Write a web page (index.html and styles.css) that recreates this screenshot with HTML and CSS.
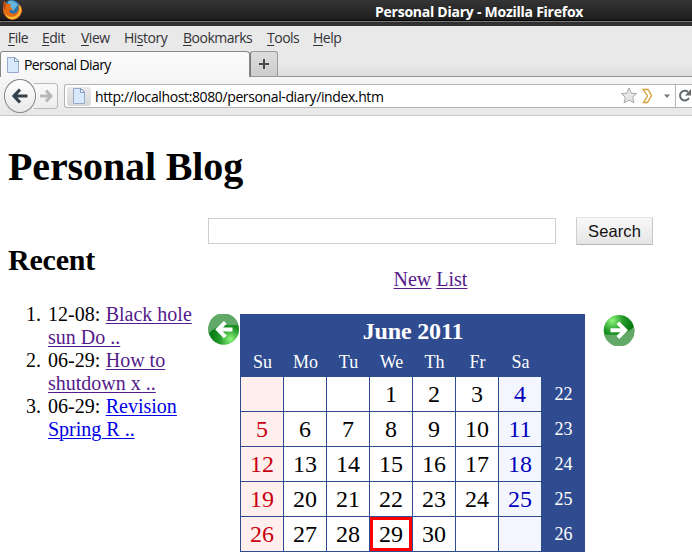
FILE: index.html
```html
<!DOCTYPE html>
<html lang="en">
<head>
<meta charset="utf-8">
<title>Personal Diary</title>
<link rel="stylesheet" href="styles.css">
</head>
<body>
<header class="titlebar">
  <svg class="fox" width="22" height="21" viewBox="0 0 22 21"><circle cx="11" cy="9" r="9" fill="#2d6fa8"/><path d="M7 1Q13-1 17 5L12 11 8 8Z" fill="#66b4dc"/><path d="M3 1L6 4 10 4 9 7 12 9 8 11Q10 15 15 13 19 10 17 4 22 7 21 12 19 19 11 20 2 18 2 9Z" fill="#e56b13"/><path d="M18 5Q20 16 11 17 6 17 4 13 6 20 13 19 21 16 20 7Z" fill="#fbc23c"/><path d="M3 1L5 5 4 10Q1 7 3 1" fill="#b84619"/></svg>
  <span class="window-title">Personal Diary - Mozilla Firefox</span>
</header>
<nav class="menubar">
  <span><u>F</u>ile</span><span><u>E</u>dit</span><span><u>V</u>iew</span><span>Hi<u>s</u>tory</span><span><u>B</u>ookmarks</span><span><u>T</u>ools</span><span><u>H</u>elp</span>
</nav>
<div class="tabs">
  <div class="tab"><svg class="page-icon" width="12" height="16" viewBox="0 0 12 16"><path d="M.5.5H8L11.5 4V15.5H.5Z" fill="#d9e9fc" stroke="#94abce"/><path d="M7.5.5V4.5H11.5Z" fill="#fff" stroke="#819bc0"/></svg><span class="tab-name">Personal Diary</span></div>
  <div class="new-tab"><svg width="12" height="12" viewBox="0 0 12 12"><path d="M6 1V11M1 6H11" stroke="#434b52" stroke-width="2"/></svg></div>
</div>
<div class="toolbar">
  <div class="back"><svg width="18" height="18" viewBox="0 0 18 18"><path d="M9 2.5L3 9 9 15.5M3.5 9H16.5" fill="none" stroke="#34414c" stroke-width="3.2"/></svg></div>
  <div class="forward"><svg width="14" height="14" viewBox="0 0 14 14"><path d="M7 1.5L12 7 7 12.5M1 7H11.5" fill="none" stroke="#b4b8bb" stroke-width="3"/></svg></div>
  <div class="address">
    <div class="identity"><svg width="12" height="16" viewBox="0 0 12 16"><path d="M.5.5H8L11.5 4V15.5H.5Z" fill="#d9e9fc" stroke="#94abce"/><path d="M7.5.5V4.5H11.5Z" fill="#fff" stroke="#819bc0"/></svg></div>
    <span class="url">http://localhost:8080/personal-diary/index.htm</span>
    <svg class="controls" width="71" height="22" viewBox="0 0 71 22"><path d="M8 3L10.3 8.2 15.5 8.6 11.7 12.3 13 17.8 8 15 3 17.8 4.3 12.3.5 8.6 5.7 8.2Z" fill="#e7e7e7" stroke="#a7a7a7"/><path d="M22 4.5L27 4.5 30.5 10.5 26.5 17.5H22.5L26.5 11Z" fill="#fff" stroke="#d4a035" stroke-width="1.3"/><path d="M43 9.5H49L46 13Z" fill="#777"/><path d="M54.5 0V22" stroke="#b6b6b6"/><path d="M67 7A4.8 4.8 0 1 0 68 13" fill="none" stroke="#666b70" stroke-width="2"/><path d="M70 4V10.5H64Z" fill="#666b70"/></svg>
  </div>
</div>
<main class="blog">
  <h1>Personal Blog</h1>
  <div class="columns">
    <aside class="recent">
      <h2>Recent</h2>
      <ol>
        <li><span>1.</span>12-08: <a href="#">Black hole<br>sun Do ..</a></li>
        <li><span>2.</span>06-29: <a href="#">How to<br>shutdown x ..</a></li>
        <li><span>3.</span>06-29: <a class="unvisited" href="#">Revision<br>Spring R ..</a></li>
      </ol>
    </aside>
    <section class="diary">
      <form class="search"><input type="text" aria-label="Search"><button type="button">Search</button></form>
      <div class="actions"><a href="#">New</a> <a href="#">List</a></div>
      <div class="month">
        <svg class="arrow" width="32" height="32" viewBox="0 0 32 32"><defs><radialGradient id="green" cx=".72" cy=".82" r=".65"><stop stop-color="#8df77c"/><stop offset=".55" stop-color="#249a2b"/><stop offset="1" stop-color="#087b13"/></radialGradient></defs><circle cx="15.7" cy="15.5" r="15.3" fill="url(#green)"/><path d="M.6 18A15.3 15.3 0 0 1 30.4 11H16Q10 11 1 19Z" fill="#62a967"/><path d="M17.3 8.3L10 15.6 17.3 22.9M10.5 15.6H24.5" fill="none" stroke="#fff" stroke-width="4"/></svg>
        <div class="calendar">
          <div class="caption">June 2011</div>
          <div class="weekdays"><span>Su</span><span>Mo</span><span>Tu</span><span>We</span><span>Th</span><span>Fr</span><span>Sa</span></div>
          <div class="days">
            <span class="sun"></span><span></span><span></span><span>1</span><span>2</span><span>3</span><span class="sat">4</span><b>22</b>
            <span class="sun">5</span><span>6</span><span>7</span><span>8</span><span>9</span><span>10</span><span class="sat">11</span><b>23</b>
            <span class="sun">12</span><span>13</span><span>14</span><span>15</span><span>16</span><span>17</span><span class="sat">18</span><b>24</b>
            <span class="sun">19</span><span>20</span><span>21</span><span>22</span><span>23</span><span>24</span><span class="sat">25</span><b>25</b>
            <span class="sun">26</span><span>27</span><span>28</span><span class="today">29</span><span>30</span><span></span><span class="sat"></span><b>26</b>
          </div>
        </div>
        <svg class="arrow next" width="32" height="32" viewBox="0 0 32 32"><g transform="rotate(180 16 16)"><circle cx="16" cy="15.7" r="15.3" fill="url(#green)"/><path d="M.9 18.2A15.3 15.3 0 0 1 30.7 11.2H16Q10 11 1.1 19Z" fill="#62a967"/><path d="M17.1 8.5L9.8 15.8 17.1 23.1M10.3 15.8H24.5" fill="none" stroke="#fff" stroke-width="4"/></g></svg>
      </div>
    </section>
  </div>
</main>
</body>
</html>
```
FILE: styles.css
```css
* { box-sizing: border-box; }
body { margin: 0; width: 692px; height: 558px; overflow: hidden; background: #fff; color: #000; font: 20px/23px "Liberation Serif", serif; }
svg { display: block; flex: none; }
.titlebar, .menubar, .tabs, .toolbar { font-family: "Open Sans", "Noto Sans", sans-serif; font-size: 14px; white-space: nowrap; }
.titlebar { display: flex; height: 26px; background: linear-gradient(#353535, #202020 18px, #181818 20px, #080808 20px, #080808 21px, #777 21px, #777 22px, #303030 22px); }
.fox { margin-left: 1px; }
.window-title { margin: 1px 0 0 352px; color: #fff; font-weight: 700; line-height: 22px; letter-spacing: -.25px; }
.menubar { display: grid; grid-template-columns: 34px 39px 43px 59px 84px 46px 50px; height: 25px; padding-left: 8px; background: #e9e9e9; color: #333337; line-height: 24px; letter-spacing: -.5px; }
.menubar u { text-underline-offset: 2px; }
.tabs { display: flex; height: 26px; background: linear-gradient(#e9e9e9 55%, #dcdcdc); border-bottom: 1px solid #929292; }
.tab { display: flex; align-items: center; width: 250px; height: 26px; padding-left: 6px; background: linear-gradient(#fbfbfb, #f6f6f6); border: 1px solid #888; border-width: 1px 1px 0 1px; border-radius: 3px 4px 0 0; }
.tab-name { margin-left: 5px; letter-spacing: -.58px; }
.new-tab { display: flex; align-items: center; justify-content: center; width: 28px; height: 26px; border: 1px solid #999; border-left-color: #777; border-radius: 3px 3px 0 0; background: linear-gradient(#ddd, #ccc); }
.toolbar { display: flex; align-items: center; height: 39px; padding-left: 4px; background: linear-gradient(#f6f6f6, #e7e7e7); border-bottom: 1px solid #c8c8c8; }
.back { z-index: 1; display: flex; align-items: center; justify-content: center; width: 32px; height: 34px; border: 1px solid #858585; border-radius: 50%; background: linear-gradient(#fff, #e9e9e9); }
.forward { display: flex; align-items: center; justify-content: center; width: 24px; height: 26px; margin-left: -2px; border: 1px solid #bbb; border-left: 0; border-radius: 0 4px 4px 0; background: linear-gradient(#fafafa, #ededed); }
.address { display: flex; align-items: center; width: 628px; height: 24px; margin-left: 6px; padding-left: 2px; border: 1px solid #b4b4b4; border-right: 0; border-radius: 3px 0 0 3px; background: #fff; }
.identity { display: flex; align-items: center; justify-content: center; width: 24px; height: 19px; border-radius: 3px; background: linear-gradient(#e9e9e9, #d8d8d8); }
.url { margin-left: 4px; letter-spacing: -.38px; }
.controls { margin-left: auto; }
.blog { padding-left: 8px; }
h1 { margin: 28px 0 28px; font-size: 40px; line-height: 46px; letter-spacing: -.12px; }
.columns { display: flex; }
.recent { width: 200px; }
h2 { margin: 25px 0 26px; font-size: 30px; line-height: 34px; letter-spacing: -.2px; }
ol { margin: 0; padding-left: 40px; list-style: none; white-space: nowrap; }
li span { display: inline-block; width: 22px; margin-left: -22px; }
a { color: #551a8b; text-decoration: underline; text-underline-offset: 2px; text-decoration-thickness: 1px; }
li a { margin-left: .5px; }
.unvisited { color: #0000e8; }
.diary { width: 445px; }
.search { display: flex; gap: 20px; height: 27px; margin: 0; }
.search input { width: 348px; height: 26px; margin: 0; padding: 0; border: 1px solid #cfcfcf; }
.search button { width: 77px; height: 28px; margin-top: -1px; padding: 0; border: 1px solid #ddd; border-color: #e4e4e4 #c7c7c7 #b5b5b5 #cfcfcf; border-radius: 1px; background: linear-gradient(#f8f8f8, #e5e5e5); color: #111; font: 16.5px "Liberation Sans", sans-serif; letter-spacing: .1px; }
.actions { height: 23px; margin-top: 23px; text-align: center; }
.month { display: flex; margin-top: 23px; }
.calendar { width: 345px; height: 238px; padding: 0 0 1px 1px; background: #304c90; color: #fff; }
.caption { height: 34px; line-height: 34px; font-size: 24px; font-weight: 700; text-align: center; letter-spacing: -.15px; }
.weekdays { display: grid; grid-template-columns: repeat(7, 43px); height: 29px; font-size: 18px; line-height: 29px; text-align: center; }
.days { display: grid; grid-template-columns: repeat(7, 42px) 43px; grid-auto-rows: 34px; gap: 1px; }
.days span { background: #fff; color: #000; font-size: 24px; line-height: 34px; text-align: center; }
.days b { font-size: 18px; font-weight: 400; line-height: 34px; text-align: center; }
.days .sun { background: #ffefed; color: #c90011; }
.days .sat { background: #f4f6ff; color: #0000bd; }
.days .today { border: 3px solid #f00; line-height: 28px; }
.next { margin-left: 18px; }
```
